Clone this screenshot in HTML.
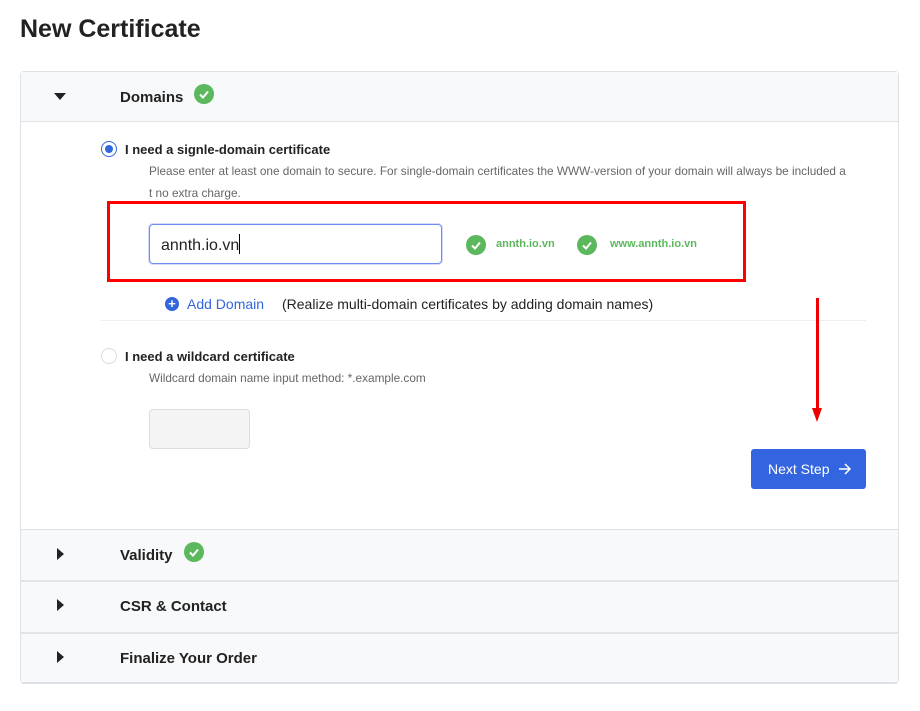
<!DOCTYPE html>
<html><head><meta charset="utf-8"><style>
*{box-sizing:border-box;margin:0;padding:0}
body{width:920px;height:711px;background:#fff;font-family:"Liberation Sans",sans-serif;color:#222;position:relative;overflow:hidden}
.a{position:absolute}
.chk{position:absolute;width:20px;height:20px;border-radius:50%;background:#5cb85c}
.chk svg{position:absolute;left:0;top:0}
.tri{position:absolute;width:0;height:0}
.hdr{position:absolute;left:21px;width:877px;background:#f8f9fa;border-top:1px solid #dee2e6}
</style></head><body>
<div class="a" style="left:20px;top:15px;font-size:25px;font-weight:bold;color:#222">New Certificate</div>
<div class="a" style="left:20px;top:71px;width:879px;height:613px;border:1px solid #dee2e6;border-radius:4px"></div>
<div class="a" style="left:21px;top:72px;width:877px;height:50px;background:#f8f9fa;border-bottom:1px solid #dee2e6"></div>
<div class="tri" style="left:54px;top:93px;border-left:6px solid transparent;border-right:6px solid transparent;border-top:7px solid #222"></div>
<div class="a" style="left:120px;top:89px;font-size:15px;font-weight:bold">Domains</div>
<div class="chk" style="left:194px;top:84px"><svg width="20" height="20"><path d="M6 10.5l3 3 5-6" stroke="#fff" stroke-width="2" fill="none"/></svg></div>
<div class="a" style="left:101px;top:141px;width:16px;height:16px;border-radius:50%;border:1px solid #3366dd;background:#fff"></div>
<div class="a" style="left:105px;top:145px;width:8px;height:8px;border-radius:50%;background:#3366dd"></div>
<div class="a" style="left:125px;top:142px;font-size:13px;font-weight:bold">I need a signle-domain certificate</div>
<div class="a" style="left:149px;top:160px;width:720px;font-size:11.8px;color:#666;line-height:22px">Please enter at least one domain to secure. For single-domain certificates the WWW-version of your domain will always be included a<br>t no extra charge.</div>
<div class="a" style="left:107px;top:201px;width:639px;height:81px;border:3px solid #f00"></div>
<div class="a" style="left:149px;top:224px;width:293px;height:40px;border:1px solid #6b8ef5;border-radius:4px;box-shadow:0 0 0 1px #d3ddfb;font-size:16px;padding:9px 0 0 11px">annth.io.vn<span style="display:inline-block;width:1px;height:20px;background:#000;vertical-align:-4px"></span></div>
<div class="chk" style="left:466px;top:235px"><svg width="20" height="20"><path d="M6 10.5l3 3 5-6" stroke="#fff" stroke-width="2" fill="none"/></svg></div>
<div class="a" style="left:496px;top:238px;font-size:11px;font-weight:bold;color:#5cb85c">annth.io.vn</div>
<div class="chk" style="left:577px;top:235px"><svg width="20" height="20"><path d="M6 10.5l3 3 5-6" stroke="#fff" stroke-width="2" fill="none"/></svg></div>
<div class="a" style="left:610px;top:238px;font-size:11px;font-weight:bold;color:#5cb85c">www.annth.io.vn</div>
<div class="a" style="left:165px;top:297px;width:14px;height:14px;border-radius:50%;background:#3366dd;color:#fff;font-size:13px;line-height:13px;text-align:center;font-weight:bold">+</div>
<div class="a" style="left:187px;top:296px;font-size:14px;color:#3366dd">Add Domain</div>
<div class="a" style="left:282px;top:296px;font-size:14px;color:#222">(Realize multi-domain certificates by adding domain names)</div>
<div class="a" style="left:101px;top:320px;width:765px;height:1px;background:#eee"></div>
<div class="a" style="left:816px;top:298px;width:3px;height:112px;background:#e00"></div>
<div class="tri" style="left:812px;top:408px;border-left:5px solid transparent;border-right:5px solid transparent;border-top:14px solid #e00"></div>
<div class="a" style="left:101px;top:348px;width:16px;height:16px;border-radius:50%;border:1px solid #ddd;background:#fff"></div>
<div class="a" style="left:125px;top:349px;font-size:13px;font-weight:bold">I need a wildcard certificate</div>
<div class="a" style="left:149px;top:371px;font-size:11.8px;color:#666">Wildcard domain name input method: *.example.com</div>
<div class="a" style="left:149px;top:409px;width:101px;height:40px;background:#f4f4f4;border:1px solid #ddd;border-radius:4px"></div>
<div class="a" style="left:751px;top:449px;width:115px;height:40px;background:#3465e0;border-radius:3px;color:#fff;font-size:14px;line-height:40px;padding-left:17px">Next Step <svg width="14" height="12" style="margin-left:5px;vertical-align:-1px"><path d="M1 6h11M7 1l5 5-5 5" stroke="#fff" stroke-width="1.5" fill="none"/></svg></div>
<div class="hdr" style="top:529px;height:51px;border-top:1px solid #dee2e6"></div>
<div class="hdr" style="top:580px;height:52px;border-top:2px solid #e2e4e8"></div>
<div class="hdr" style="top:632px;height:51px;border-top:2px solid #e2e4e8;border-bottom:1px solid #dee2e6"></div>
<div class="tri" style="left:57px;top:548px;border-top:6px solid transparent;border-bottom:6px solid transparent;border-left:7px solid #222"></div>
<div class="tri" style="left:57px;top:599px;border-top:6px solid transparent;border-bottom:6px solid transparent;border-left:7px solid #222"></div>
<div class="tri" style="left:57px;top:651px;border-top:6px solid transparent;border-bottom:6px solid transparent;border-left:7px solid #222"></div>
<div class="a" style="left:120px;top:547px;font-size:15px;font-weight:bold">Validity</div>
<div class="chk" style="left:184px;top:542px"><svg width="20" height="20"><path d="M6 10.5l3 3 5-6" stroke="#fff" stroke-width="2" fill="none"/></svg></div>
<div class="a" style="left:120px;top:598px;font-size:15px;font-weight:bold">CSR &amp; Contact</div>
<div class="a" style="left:120px;top:650px;font-size:15px;font-weight:bold">Finalize Your Order</div>
</body></html>
